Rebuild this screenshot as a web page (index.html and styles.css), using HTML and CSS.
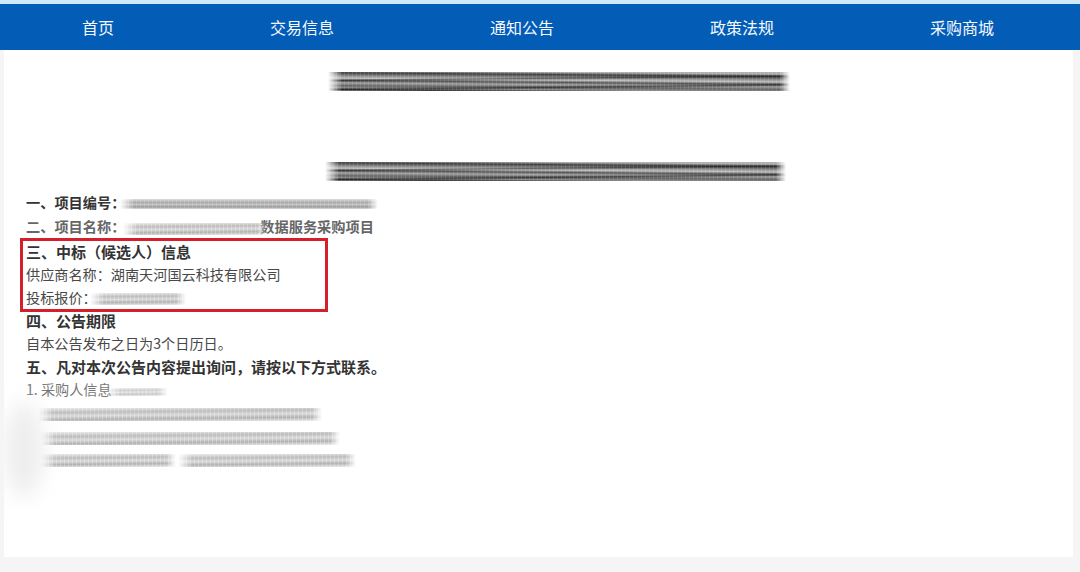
FILE: index.html
```html
<!DOCTYPE html>
<html lang="zh-CN">
<head>
<meta charset="utf-8">
<title>公告</title>
<link rel="stylesheet" href="styles.css">
</head>
<body>
<nav class="nav">
  <a>首页</a>
  <a>交易信息</a>
  <a>通知公告</a>
  <a>政策法规</a>
  <a>采购商城</a>
</nav>
<main class="card">
  <div class="smear dark title-one"></div>
  <div class="smear dark title-two"></div>
  <section class="content">
    <p class="line strong small">一、项目编号&#xFF1A;<span class="smear mid ref-no"></span></p>
    <p class="line strong small muted">二、项目名称&#xFF1A;<span class="smear light project"></span>数据服务采购项目</p>
    <div class="highlight">
      <p class="line strong">三、中标&#xFF08;候选人&#xFF09;信息</p>
      <p class="line">供应商名称&#xFF1A;湖南天河国云科技有限公司</p>
      <p class="line">投标报价&#xFF1A;<span class="smear light price"></span></p>
    </div>
    <p class="line strong">四、公告期限</p>
    <p class="line">自本公告发布之日为3个日历日。</p>
    <p class="line strong">五、凡对本次公告内容提出询问&#xFF0C;请按以下方式联系。</p>
    <p class="line faded">1. 采购人信息<span class="smear light trail"></span></p>
    <div class="smear light row-one"></div>
    <div class="smear light row-two"></div>
    <div class="row-three">
      <div class="smear light part-a"></div>
      <div class="smear light part-b"></div>
    </div>
  </section>
  <div class="blob"></div>
</main>
</body>
</html>
```

FILE: styles.css
```css
* { box-sizing: border-box; }

html, body { margin: 0; height: 572px; overflow: hidden; }

body {
  background: #f5f5f5;
  font-family: "Noto Sans CJK SC", "Liberation Sans", sans-serif;
  color: #484848;
  border-top: 4px solid #cfe9fb;
}

.nav {
  display: flex;
  align-items: center;
  gap: 156px;
  height: 46px;
  padding: 0 0 1px 82px;
  background: #035cb6;
  color: #f4f9ff;
  font-size: 16px;
}

.card {
  position: relative;
  width: 1069px;
  height: 507px;
  margin-left: 4px;
  padding-top: 22px;
  background: #fff;
  overflow: hidden;
}

.smear {
  display: block;
  filter: blur(0.5px);
  -webkit-mask-image: linear-gradient(90deg, transparent 0, #000 14px, #000 calc(100% - 10px), transparent 100%);
  mask-image: linear-gradient(90deg, transparent 0, #000 14px, #000 calc(100% - 10px), transparent 100%);
}

.dark {
  height: 19px;
  background-blend-mode: normal, multiply, normal;
  background-image:
    repeating-linear-gradient(90deg, rgba(255,255,255,.1) 0 1px, transparent 1px 4px),
    linear-gradient(179.4deg, #fff 0 30%, #999 36%, #fff 44%, #fff 66%, #888 74%, #fff 82%),
    linear-gradient(180.5deg, #b0b0b0 0 10%, #3f3f3f 20%, #8f8f8f 34%, #c0c0c0 44%, #555 54%, #a4a4a4 64%, #666 76%, #8a8a8a 86%, #3a3a3a 94%, #bbb 100%);
}

.mid {
  background-image:
    repeating-linear-gradient(90deg, rgba(255,255,255,.16) 0 1px, transparent 1px 4px),
    linear-gradient(180deg, #ddd 0, #aaa 35%, #c4c4c4 55%, #999 80%, #ddd 100%);
}

.light {
  background-image:
    repeating-linear-gradient(90deg, rgba(255,255,255,.25) 0 1px, transparent 1px 4px),
    linear-gradient(179.4deg, #ececec 0, #bcbcbc 30%, #dcdcdc 52%, #b2b2b2 75%, #ececec 100%);
}

.title-one { width: 462px; margin-left: 324px; }

.title-two { width: 461px; margin: 71px 0 0 321px; }

.content { margin-top: 11px; padding-left: 22px; }

.line {
  margin: 0;
  height: 23.2px;
  line-height: 21px;
  font-size: 14.15px;
  white-space: nowrap;
}

.strong { font-size: 15px; font-weight: 700; color: #333; }

.small { height: 24.4px; line-height: 21.5px; font-size: 14.2px; }

.muted { color: #666; }

.faded { color: #777; }

.ref-no, .project, .price, .trail {
  display: inline-block;
  vertical-align: middle;
}

.ref-no { width: 258px; height: 10px; margin-left: -5px; }

.project { width: 144px; height: 12px; margin: 0 -7px 0 -2px; }

.price { width: 96px; height: 12px; margin-left: -7px; }

.trail { width: 62px; height: 8px; margin-left: -6px; opacity: .75; }

.highlight {
  width: 308px;
  height: 74px;
  margin: -3px 0 -2px -6px;
  padding: 0 0 0 3px;
  border: 3px solid #d3202b;
}

.row-one { width: 284px; height: 13px; margin: 5px 0 0 12px; }

.row-two { width: 300px; height: 13px; margin: 11px 0 0 14px; }

.row-three { display: flex; gap: 2px; margin: 9px 0 0 14px; }

.part-a { width: 136px; height: 13px; }

.part-b { width: 178px; height: 13px; }

.blob {
  position: absolute;
  left: 0;
  top: 352px;
  width: 40px;
  height: 96px;
  border-radius: 50%;
  background: #eeeeee;
  filter: blur(10px);
}
```
